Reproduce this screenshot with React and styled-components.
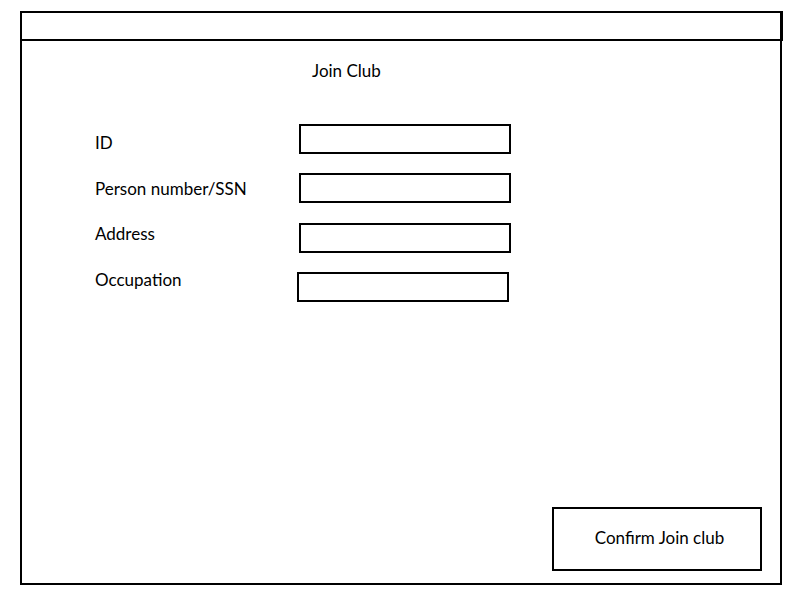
import { Fragment } from 'react';
import styled, { createGlobalStyle } from 'styled-components';

const GlobalStyle = createGlobalStyle`
	html, body {
		margin: 0;
		padding: 0;
		background: #ffffff;
	}
	body {
		font-family: Lato, "Open Sans", "Liberation Sans", sans-serif;
		color: #000000;
	}
`;

const Page = styled.div`
	padding: 11px 0 0 20px;
	width: 800px;
	height: 600px;
	box-sizing: border-box;
`;

const Window = styled.div`
	display: flex;
	flex-direction: column;
	width: 762px;
`;

const TitleBar = styled.div`
	width: 763px;
	height: 30px;
	box-sizing: border-box;
	border: 2px solid #000;
	border-right-width: 3px;
`;

const Body = styled.div`
	display: flex;
	flex-direction: column;
	height: 544px;
	box-sizing: border-box;
	border: 2px solid #000;
	border-top: none;
	padding: 20px 18px 12px 0;
`;

const Title = styled.h1`
	margin: 0 0 43px 290px;
	font-size: 17px;
	font-weight: 400;
	line-height: 20px;
`;

const Form = styled.div`
	display: grid;
	grid-template-columns: 204px 212px;
	grid-auto-rows: 49.33px;
	padding-left: 73px;
`;

const Label = styled.label`
	font-size: 17px;
	line-height: 20px;
	margin-top: ${(p) => p.$drop}px;
`;

const Field = styled.input`
	width: 212px;
	height: 30px;
	box-sizing: border-box;
	border: 2px solid #000;
	border-radius: 0;
	padding: 0 6px;
	margin-left: ${(p) => p.$nudge || 0}px;
	background: #fff;
	font: inherit;
	outline: none;
`;

const Footer = styled.div`
	margin-top: auto;
	display: flex;
	justify-content: flex-end;
`;

const ConfirmButton = styled.button`
	width: 210px;
	height: 64px;
	box-sizing: border-box;
	border: 2px solid #000;
	border-radius: 0;
	background: #fff;
	font-family: inherit;
	font-size: 17px;
	color: #000;
	padding: 0 0 4px 5px;
	cursor: pointer;
`;

const fields = [
	{ label: 'ID', drop: 9 },
	{ label: 'Person number/SSN', drop: 6 },
	{ label: 'Address', drop: 1 },
	{ label: 'Occupation', drop: -2, nudge: -2 },
];

export default function App() {
	return (
		<>
			<GlobalStyle />
			<Page>
				<Window>
					<TitleBar />
					<Body>
						<Title>Join Club</Title>
						<Form>
							{fields.map((f) => (
								<Fragment key={f.label}>
									<Label $drop={f.drop}>{f.label}</Label>
									<Field $nudge={f.nudge} />
								</Fragment>
							))}
						</Form>
						<Footer>
							<ConfirmButton>Confirm Join club</ConfirmButton>
						</Footer>
					</Body>
				</Window>
			</Page>
		</>
	);
}
